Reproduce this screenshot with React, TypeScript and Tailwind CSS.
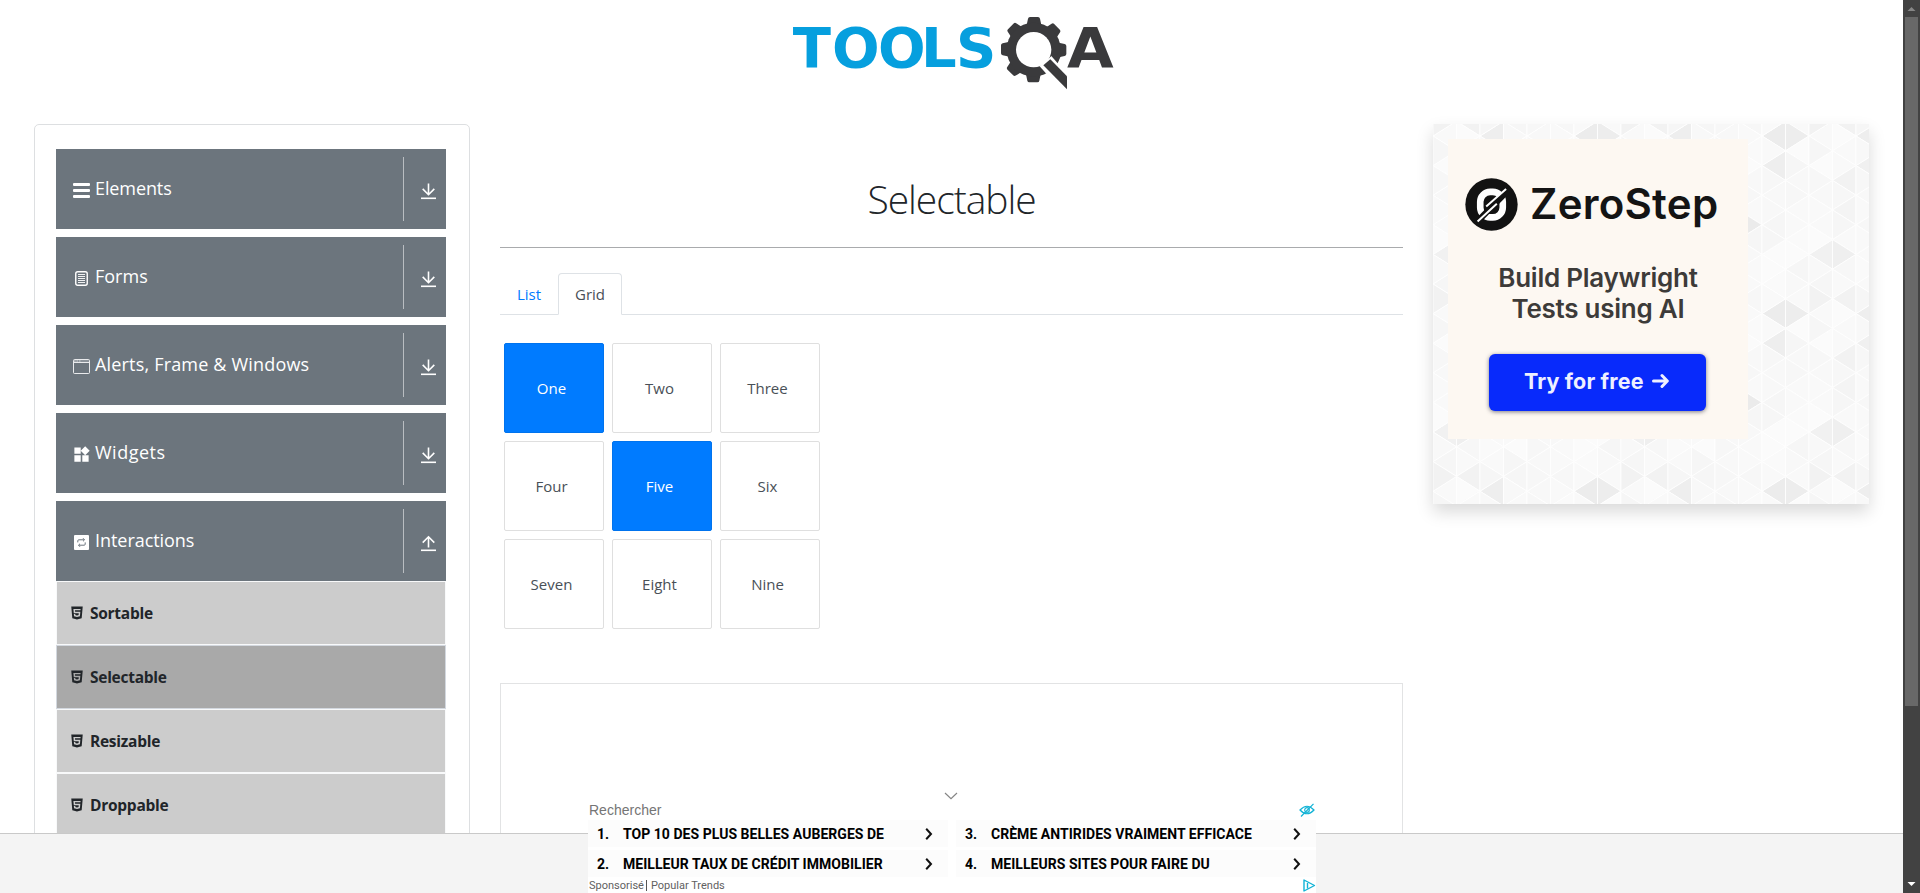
import type { ReactNode } from "react";
import { AiFillHtml5 } from "react-icons/ai";
import { MdWidgets } from "react-icons/md";

/* ---------- Brand logo ---------- */

const GEAR_TEETH = [0, 45, 90, 135, 180, 225, 270, 315];

function Logo() {
  return (
    <svg viewBox="0 0 1050 330" className="h-[110px] w-[350px]">
      <text
        y="201"
        x="38 156 294 423 528"
        fill="#069fde"
        fontFamily="DejaVu Sans"
        fontWeight="700"
        fontSize="168"
      >
        TOOLS
      </text>
      <g fill="#3a3a3c">
        {GEAR_TEETH.map((a) => (
          <path
            key={a}
            d="M738 84 L744 56 Q745 51 750 51 L774 51 Q779 51 780 56 L786 84 Z"
            transform={`rotate(${a} 761 149)`}
          />
        ))}
        <circle cx="761" cy="149" r="81" />
      </g>
      <circle cx="761" cy="149" r="53" fill="#fff" />
      <path d="M779 199 L817 166 L880 232 L880 290 L860 290 Z" fill="#fff" />
      <path d="M790 196 L811 178 L861 229 L861 268 Z" fill="#3a3a3c" />
      <path d="M812 166 L833 190 L846 160 Z" fill="#3a3a3c" />
      <text
        x="861"
        y="201"
        fill="#3a3a3c"
        fontFamily="DejaVu Sans"
        fontWeight="700"
        fontSize="168"
        textLength="140"
        lengthAdjust="spacingAndGlyphs"
      >
        A
      </text>
    </svg>
  );
}

/* ---------- Sidebar ---------- */

const MenuIcon = () => (
  <svg viewBox="0 0 17 17" className="size-[17px]" fill="#fff">
    <rect x="0" y="1" width="17" height="3" rx="1" />
    <rect x="0" y="7" width="17" height="3" rx="1" />
    <rect x="0" y="13" width="17" height="3" rx="1" />
  </svg>
);

const FormIcon = () => (
  <svg viewBox="0 0 17 17" className="size-[17px]" fill="none" stroke="#fff">
    <rect x="2.75" y="1.75" width="11.5" height="13.5" rx="2" strokeWidth="1.4" />
    <path d="M5 4.5h7M5 6.5h7M5 8.5h7M5 10.5h7M5 12.5h7" strokeWidth="0.9" />
  </svg>
);

const WindowIcon = () => (
  <svg viewBox="0 0 17 17" className="size-[17px]" fill="none" stroke="#fff">
    <rect x="0.5" y="1.5" width="16" height="14" rx="1" strokeOpacity="0.85" />
    <path d="M1 4.5h15" strokeOpacity="0.85" />
    <path d="M1 3h15" strokeOpacity="0.45" />
    <path d="M1 3h7" strokeOpacity="0.6" strokeDasharray="1.5 1" />
  </svg>
);

const WidgetsIcon = () => <MdWidgets className="-ml-px size-[19px] shrink-0 text-white" />;

const SwapIcon = () => (
  <svg viewBox="0 0 17 17" className="size-[17px]">
    <rect x="1" y="1" width="15" height="15" rx="1" fill="#fff" />
    <g fill="none" stroke="#6c757d" strokeWidth="1">
      <path d="M4.8 8.4V6.8q0-1 1-1H11M10 4.2l1.6 1.6L10 7.3M12.2 8.4v1.8q0 1-1 1H6M7 9.8l-1.6 1.4L7 12.8" />
    </g>
  </svg>
);

function ToggleArrow({ open }: { open?: boolean }) {
  return (
    <svg viewBox="0 0 16 17" className="h-[17px] w-4 shrink-0" fill="none" stroke="#fff" strokeWidth="1.6">
      {open ? <path d="M7.5 12.5V2M1.7 7.6L7.5 1.8l5.8 5.8" /> : <path d="M7.5 0.5V11.5M1.7 5.9L7.5 11.7l5.8-5.8" />}
      <path d="M0 15.3h15" />
    </svg>
  );
}

function Group({ icon, label, spacing, open }: { icon: ReactNode; label: string; spacing: string; open?: boolean }) {
  return (
    <div className="flex h-20 items-center bg-[#6c757d] pl-[17px] text-white">
      <span className="flex w-[17px] shrink-0 pt-[3px]">{icon}</span>
      <span className={`ml-[5px] flex-1 pb-[2px] text-[18px] leading-6 whitespace-nowrap ${spacing}`}>{label}</span>
      <div className="flex h-16 w-[43px] items-center border-l border-[#b9bdc1] pt-[4px] pl-[17px]">
        <ToggleArrow open={open} />
      </div>
    </div>
  );
}

function SubItem({ label, active }: { label: string; active?: boolean }) {
  return (
    <li
      className={`flex h-16 items-center gap-[5px] border pl-3 text-[15.5px] font-bold tracking-[-0.27px] text-[#212529] ${
        active ? "border-[#d3d8df] bg-[#a9a9a9]" : "border-[#f8f9fa] bg-[#ccc]"
      }`}
    >
      <AiFillHtml5 className="size-4" />
      <span className="pt-[2px]">{label}</span>
    </li>
  );
}

function Sidebar() {
  return (
    <aside className="flex h-[820px] w-[436px] shrink-0 flex-col gap-2 rounded-[5px] border border-[#dddfe1] pt-6 pr-[23px] pl-[21px]">
      <Group icon={<MenuIcon />} label="Elements" spacing="tracking-[-0.1px]" />
      <Group icon={<FormIcon />} label="Forms" spacing="tracking-normal" />
      <Group icon={<WindowIcon />} label="Alerts, Frame & Windows" spacing="tracking-[0.18px]" />
      <Group icon={<WidgetsIcon />} label="Widgets" spacing="tracking-[0.5px]" />
      <div>
        <Group icon={<SwapIcon />} label="Interactions" spacing="tracking-[-0.05px]" open />
        <ul>
          <SubItem label="Sortable" />
          <SubItem label="Selectable" active />
          <SubItem label="Resizable" />
          <SubItem label="Droppable" />
        </ul>
      </div>
    </aside>
  );
}

/* ---------- Main column ---------- */

const CELLS = ["One", "Two", "Three", "Four", "Five", "Six", "Seven", "Eight", "Nine"];
const SELECTED = new Set(["One", "Five"]);

function Main() {
  return (
    <main className="ml-[30px] flex w-[903px] shrink-0 flex-col">
      <h1 className="mt-[51px] text-center text-[39px] leading-[48px] font-light tracking-[-1.05px] text-[#212529]">
        Selectable
      </h1>
      <div className="mt-6 h-px bg-[#a9abad]" />
      <div className="mt-[25px] flex h-[42px] border-b border-[#dee2e6] text-[15px]">
        <span className="flex h-[42px] w-[58px] items-center justify-center text-[#007bff]">List</span>
        <span className="flex h-[42px] w-16 items-center justify-center rounded-t border border-[#dee2e6] border-b-white bg-white text-[#495057]">
          Grid
        </span>
      </div>
      <div className="mt-7 ml-1 grid w-[316px] grid-cols-3 gap-2">
        {CELLS.map((c) => (
          <div
            key={c}
            className={`flex h-[90px] items-center justify-center rounded-[2px] border pr-[5px] text-[15px] ${
              SELECTED.has(c) ? "border-[#0073ee] bg-[#007bff] text-white" : "border-[#dfdfdf] bg-white text-[#495057]"
            }`}
          >
            {c}
          </div>
        ))}
      </div>
      <div className="mt-[54px] h-[250px] border border-[#e2e3e4]" />
    </main>
  );
}

/* ---------- Advert with the triangle backdrop ---------- */

const COL = 23.5;
const SIDE = 29.6;

// Shades keyed by "column (mod 8), direction, row (mod 6)".
const SHADES: Record<string, string> = {
  "6L0": "#ececec",
  "7R0": "#ededed",
  "2L0": "#eeeeee",
  "6L1": "#eeeeee",
  "2L1": "#f0f0f0",
  "5R3": "#ebebeb",
  "0L4": "#f1f1f1",
  "1R4": "#efefef",
  "0R0": "#f2f2f2",
  "1L0": "#f2f2f2",
  "1L2": "#f2f2f2",
  "1L3": "#f4f4f4",
};
const LIGHT = ["#fafafa", "#f8f8f8", "#f9f9f9", "#f6f6f6", "#f9f9f9", "#fbfbfb", "#f7f7f7"];

function Triangles() {
  const out: ReactNode[] = [];
  for (let k = -1; k < 19; k++) {
    for (let r = -1; r < 14; r++) {
      for (const dir of ["L", "R"] as const) {
        const apexCol = dir === "L" ? k : k + 1;
        const y = (apexCol % 2 === 0 ? 12 : -2.8) + r * SIDE;
        const apexX = apexCol * COL;
        const baseX = (dir === "L" ? k + 1 : k) * COL;
        const km = (k + 8) % 8;
        const rm = (r + 6) % 6;
        const fill = SHADES[`${km}${dir}${rm}`] ?? LIGHT[(km * 5 + rm * 3 + km * rm + (dir === "L" ? 2 : 0)) % 7];
        out.push(
          <path
            key={`${k}${dir}${r}`}
            d={`M${apexX} ${y}L${baseX} ${y - SIDE / 2}V${y + SIDE / 2}Z`}
            fill={fill}
            stroke="#fefefe"
            strokeWidth="0.9"
          />,
        );
      }
    }
  }
  return (
    <svg viewBox="0 0 436 380" className="absolute inset-0 h-[380px] w-[436px]">
      {out}
    </svg>
  );
}

function ZeroMark() {
  return (
    <svg viewBox="133 202 160 160" className="size-[53px] shrink-0">
      <circle cx="213" cy="282" r="79" fill="#121212" />
      <rect x="179" y="244" width="68" height="77" rx="30" fill="none" stroke="#fff" strokeWidth="20" />
      <path d="M168 336L262 240" stroke="#121212" strokeWidth="19" />
      <path d="M171 333L229 280M197 288L257 235" stroke="#fff" strokeWidth="6" />
    </svg>
  );
}

function Advert() {
  return (
    <div className="relative ml-[30px] h-[380px] w-[436px] shrink-0 bg-[#fafafa] p-[15px] shadow-[0_8px_16px_rgba(0,0,0,0.15)]">
      <Triangles />
      <div className="relative flex size-[300px] flex-col bg-[#fdf8f2] font-[Inter]">
        <div className="mt-[39px] flex h-[53px] items-center pl-[17px]">
          <ZeroMark />
          <span className="ml-[12px] pb-[2px] text-[42px] leading-[50px] font-semibold tracking-[0.25px] text-[#141414]">
            ZeroStep
          </span>
        </div>
        <div className="mt-[31px] text-center text-[26px] leading-[31px] font-semibold tracking-[-0.25px] text-[#3d3b39]">
          Build Playwright
          <br />
          Tests using AI
        </div>
        <div className="mt-[30px] ml-[41px] flex h-[57px] w-[217px] items-center rounded-[6px] bg-[#082afb] pb-[3px] pl-[35px] text-[21.5px] font-bold tracking-[0.15px] text-[#eef0ff] shadow-[0_1px_4px_rgba(40,40,60,0.6)]">
          Try for free
          <svg
            viewBox="0 0 17 16"
            className="ml-[8px] h-4 w-[17px]"
            fill="none"
            stroke="#eef0ff"
            strokeWidth="3"
            strokeLinecap="round"
            strokeLinejoin="round"
          >
            <path d="M1.5 8H15M10 2.5L15.3 8L10 13.5" />
          </svg>
        </div>
      </div>
    </div>
  );
}

/* ---------- Sticky footer advert ---------- */

const LINKS: [string, string][] = [
  ["1.", "TOP 10 DES PLUS BELLES AUBERGES DE"],
  ["3.", "CRÈME ANTIRIDES VRAIMENT EFFICACE"],
  ["2.", "MEILLEUR TAUX DE CRÉDIT IMMOBILIER"],
  ["4.", "MEILLEURS SITES POUR FAIRE DU"],
];

function StickyAd() {
  return (
    <div className="absolute bottom-0 left-[588px] flex h-[103px] w-[728px] flex-col bg-white font-[Roboto]">
      <div className="flex h-[12px] justify-center pt-[2px] pr-[3px]">
        <svg viewBox="0 0 14 8" className="h-2 w-[14px]" fill="none" stroke="#858585" strokeWidth="1.2">
          <path d="M1 1L7 6.6L13 1" />
        </svg>
      </div>
      <div className="flex h-[18px] items-start justify-between pr-px pl-px">
        <span className="-mt-px font-['Liberation_Sans'] text-[14px] leading-[18px] text-[#757575]">Rechercher</span>
        <svg viewBox="0 0 16 14" className="mt-px h-[14px] w-4" fill="none" stroke="#12b3d6" strokeWidth="1.2">
          <path d="M1 7Q8 -0.5 15 7Q8 14.5 1 7Z" />
          <circle cx="8" cy="7" r="2.3" />
          <path d="M2 13.5L14.5 0.8" />
        </svg>
      </div>
      <div className="grid grid-cols-2 gap-x-2 gap-y-[3px]">
        {LINKS.map(([n, t]) => (
          <div
            key={n}
            className="flex h-[27px] items-center bg-[#fcfcfc] pt-px pl-[9px] text-[14px] font-bold tracking-[0.04px] whitespace-nowrap text-black"
          >
            <span className="w-[26px]">{n}</span>
            <span className="flex-1">{t}</span>
            <svg viewBox="0 0 8 12" className="mr-[15px] mb-px h-3 w-2" fill="none" stroke="#111" strokeWidth="2">
              <path d="M1.2 0.8L6 6L1.2 11.2" />
            </svg>
          </div>
        ))}
      </div>
      <div className="flex h-4 items-center pt-px pl-px text-[11px] leading-4 text-[#616161]">
        <span>Sponsorisé</span>
        <span className="mr-[3.5px] ml-[2.5px] h-[11px] w-px bg-[#555]" />
        <span className="flex-1">Popular Trends</span>
        <svg
          viewBox="0 0 14 13"
          className="h-[13px] w-[14px]"
          fill="none"
          stroke="#12b3d6"
          strokeWidth="1.4"
          strokeLinejoin="round"
        >
          <path d="M2 1L12.5 6.5L2 12Z" />
          <path d="M5.5 4v5.5" />
        </svg>
      </div>
    </div>
  );
}

function Scrollbar() {
  return (
    <div className="flex w-[17px] shrink-0 flex-col items-center bg-[#424242]">
      <svg viewBox="0 0 17 17" className="size-[17px] shrink-0" fill="#868686">
        <path d="M8.5 7L12.5 11H4.5Z" />
      </svg>
      <div className="h-[689px] w-[13px] bg-[#686868]" />
      <div className="flex-1" />
      <svg viewBox="0 0 17 17" className="size-[17px] shrink-0" fill="#fff">
        <path d="M8.5 10L12.5 6H4.5Z" />
      </svg>
    </div>
  );
}

export default function App() {
  return (
    <div className="flex h-[893px] w-[1920px] overflow-hidden bg-white font-['Open_Sans',sans-serif]">
      <div className="relative h-[893px] w-[1903px] overflow-hidden">
        <header className="flex h-[124px] pl-[780px]">
          <Logo />
        </header>
        <div className="flex items-start pl-[34px]">
          <Sidebar />
          <Main />
          <Advert />
        </div>
        <div className="absolute inset-x-0 bottom-0 h-[60px] border-t border-[#c9c9c9] bg-[#f4f4f4]" />
        <StickyAd />
      </div>
      <Scrollbar />
    </div>
  );
}
